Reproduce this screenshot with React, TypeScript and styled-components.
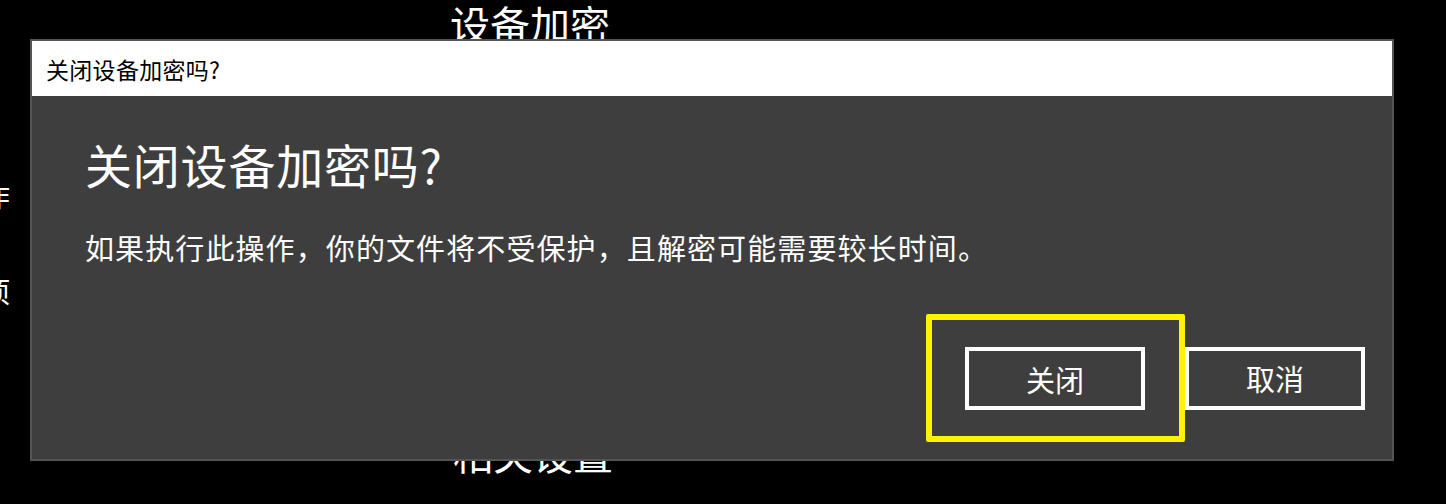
import React from "react";
import styled, { createGlobalStyle } from "styled-components";

const GlobalStyle = createGlobalStyle`
  html, body {
    margin: 0;
    padding: 0;
    background: #000;
    width: 1446px;
    height: 504px;
    overflow: hidden;
  }
  body {
    font-family: "Noto Sans CJK SC", "Noto Sans", sans-serif;
    color: #fff;
  }
  * { box-sizing: border-box; }
`;

const Page = styled.div`
  display: flex;
  flex-direction: row;
  width: 1446px;
  height: 504px;
  overflow: hidden;
  background: #000;
`;

const NavColumn = styled.nav`
  width: 10px;
  flex: none;
  display: flex;
  flex-direction: column;
  align-items: flex-end;
  padding-top: 176px;
  gap: 58px;
`;

const NavItem = styled.div`
  font-size: 28px;
  line-height: 38px;
  white-space: nowrap;
  color: #fff;
`;

const MainColumn = styled.main`
  margin-left: 440px;
  display: flex;
  flex-direction: column;
`;

const PageTitle = styled.h1`
  margin: 3px 0 0 0;
  font-weight: 400;
  font-size: 40px;
  line-height: 40px;
  color: #fff;
`;

const SectionTitle = styled.h2`
  margin: 390px 0 0 3px;
  font-weight: 400;
  font-size: 40px;
  line-height: 40px;
  color: #fff;
`;

const Dialog = styled.div`
  position: fixed;
  left: 30px;
  top: 39px;
  width: 1364px;
  height: 422px;
  border: 2px solid #555555;
  background: #3e3e3e;
  display: flex;
  flex-direction: column;
`;

const TitleBar = styled.div`
  height: 55px;
  background: #fff;
  color: #000;
  display: flex;
  align-items: center;
  padding-left: 14px;
  font-size: 23px;
  letter-spacing: 0.3px;
  flex: none;
`;

const Content = styled.div`
  display: flex;
  flex-direction: column;
  padding: 40px 0 0 53px;
  flex: 1;
`;

const Heading = styled.div`
  font-size: 47px;
  line-height: 56px;
  letter-spacing: 0.8px;
  color: #fff;
`;

const Message = styled.div`
  margin-top: 37px;
  font-size: 29px;
  line-height: 36px;
  letter-spacing: 1.1px;
  color: #fff;
`;

const ButtonRow = styled.div`
  display: flex;
  justify-content: flex-end;
  align-items: center;
  padding: 0 27px 17px 0;
  flex: none;
`;

const FocusFrame = styled.div`
  border: 6px solid #fff200;
  border-radius: 2px;
  padding: 27px 34px 26px 33px;
  display: flex;
`;

const Button = styled.button`
  width: 180px;
  height: 63px;
  border: 4px solid #fff;
  background: #3e3e3e;
  color: #fff;
  font-family: "Noto Sans CJK SC", "Noto Sans", sans-serif;
  font-size: 29px;
  padding: 0;
  display: flex;
  align-items: center;
  justify-content: center;
  cursor: pointer;
`;

export default function App() {
  return (
    <>
      <GlobalStyle />
      <Page>
        <NavColumn>
          <NavItem>工作</NavItem>
          <NavItem>选项</NavItem>
        </NavColumn>
        <MainColumn>
          <PageTitle>设备加密</PageTitle>
          <SectionTitle>相关设置</SectionTitle>
        </MainColumn>
      </Page>
      <Dialog role="dialog" aria-label="关闭设备加密吗?">
        <TitleBar>关闭设备加密吗?</TitleBar>
        <Content>
          <Heading>关闭设备加密吗?</Heading>
          <Message>
            如果执行此操作，你的文件将不受保护，且解密可能需要较长时间。
          </Message>
        </Content>
        <ButtonRow>
          <FocusFrame>
            <Button>关闭</Button>
          </FocusFrame>
          <Button>取消</Button>
        </ButtonRow>
      </Dialog>
    </>
  );
}
